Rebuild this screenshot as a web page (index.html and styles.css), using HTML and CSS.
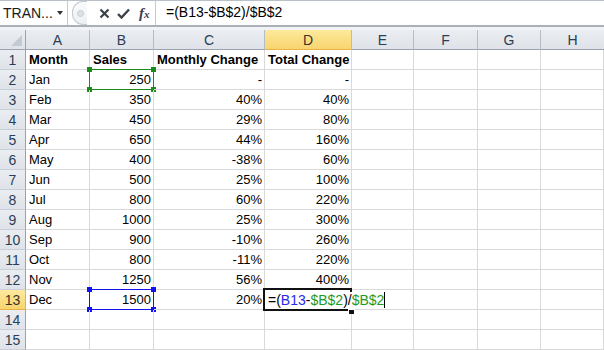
FILE: index.html
```html
<!DOCTYPE html>
<html lang="en">
  <head>
    <meta charset="UTF-8" />
    <title>Total Change</title>
    <link rel="stylesheet" href="styles.css">
  </head>
  <body>
    <!-- formula bar -->
    <div class="toolbar">
      <div class="namebox">
        <span class="name">TRAN...</span>
        <span class="arrow"></span>
      </div>
      <div class="tools">
        <span class="grip"><span class="dot"></span></span>
        <svg class="tool" width="11" height="11" viewBox="0 0 11 11">
          <path d="M1.5 1.5 L9.5 9.5 M9.5 1.5 L1.5 9.5" stroke="#3c4049" stroke-width="2.2" />
        </svg>
        <svg class="tool" width="13" height="11" viewBox="0 0 13 11">
          <path d="M1 6 L4.5 9.5 L12 1.5" stroke="#3c4049" stroke-width="2.4" fill="none" />
        </svg>
        <span class="fx">f<i>x</i></span>
      </div>
      <div class="formula">=(B13-$B$2)/$B$2</div>
    </div>
    <div class="gap"></div>

    <!-- sheet -->
    <div class="sheet">
      <div class="hd corner"><span class="tri"></span></div>
      <div class="hd col">A</div>
      <div class="hd col">B</div>
      <div class="hd col">C</div>
      <div class="hd col on">D</div>
      <div class="hd col">E</div>
      <div class="hd col">F</div>
      <div class="hd col">G</div>
      <div class="hd col last">H</div>

      <div class="hd row">1</div>
      <div class="cell b">Month</div>
      <div class="cell b">Sales</div>
      <div class="cell b">Monthly Change</div>
      <div class="cell b">Total Change</div>
      <div class="cell"></div><div class="cell"></div><div class="cell"></div><div class="cell"></div>

      <div class="hd row">2</div>
      <div class="cell">Jan</div>
      <div class="cell n">250<span class="ref green"><i class="h tl"></i><i class="h tr"></i><i class="h bl"></i><i class="h br"></i></span></div>
      <div class="cell n">-</div>
      <div class="cell n">-</div>
      <div class="cell"></div><div class="cell"></div><div class="cell"></div><div class="cell"></div>

      <div class="hd row">3</div>
      <div class="cell">Feb</div><div class="cell n">350</div><div class="cell n">40%</div><div class="cell n">40%</div>
      <div class="cell"></div><div class="cell"></div><div class="cell"></div><div class="cell"></div>

      <div class="hd row">4</div>
      <div class="cell">Mar</div><div class="cell n">450</div><div class="cell n">29%</div><div class="cell n">80%</div>
      <div class="cell"></div><div class="cell"></div><div class="cell"></div><div class="cell"></div>

      <div class="hd row">5</div>
      <div class="cell">Apr</div><div class="cell n">650</div><div class="cell n">44%</div><div class="cell n">160%</div>
      <div class="cell"></div><div class="cell"></div><div class="cell"></div><div class="cell"></div>

      <div class="hd row">6</div>
      <div class="cell">May</div><div class="cell n">400</div><div class="cell n">-38%</div><div class="cell n">60%</div>
      <div class="cell"></div><div class="cell"></div><div class="cell"></div><div class="cell"></div>

      <div class="hd row">7</div>
      <div class="cell">Jun</div><div class="cell n">500</div><div class="cell n">25%</div><div class="cell n">100%</div>
      <div class="cell"></div><div class="cell"></div><div class="cell"></div><div class="cell"></div>

      <div class="hd row">8</div>
      <div class="cell">Jul</div><div class="cell n">800</div><div class="cell n">60%</div><div class="cell n">220%</div>
      <div class="cell"></div><div class="cell"></div><div class="cell"></div><div class="cell"></div>

      <div class="hd row">9</div>
      <div class="cell">Aug</div><div class="cell n">1000</div><div class="cell n">25%</div><div class="cell n">300%</div>
      <div class="cell"></div><div class="cell"></div><div class="cell"></div><div class="cell"></div>

      <div class="hd row">10</div>
      <div class="cell">Sep</div><div class="cell n">900</div><div class="cell n">-10%</div><div class="cell n">260%</div>
      <div class="cell"></div><div class="cell"></div><div class="cell"></div><div class="cell"></div>

      <div class="hd row">11</div>
      <div class="cell">Oct</div><div class="cell n">800</div><div class="cell n">-11%</div><div class="cell n">220%</div>
      <div class="cell"></div><div class="cell"></div><div class="cell"></div><div class="cell"></div>

      <div class="hd row">12</div>
      <div class="cell">Nov</div><div class="cell n">1250</div><div class="cell n">56%</div><div class="cell n">400%</div>
      <div class="cell"></div><div class="cell"></div><div class="cell"></div><div class="cell"></div>

      <div class="hd row on">13</div>
      <div class="cell">Dec</div>
      <div class="cell n">1500<span class="ref blue"><i class="h tl"></i><i class="h tr"></i><i class="h bl"></i><i class="h br"></i></span></div>
      <div class="cell n">20%</div>
      <div class="cell edit">
        <span class="active"><i class="fill"></i></span>
        <span class="entry"><span class="k">=(</span><span class="c-blue">B13</span><span class="k">-</span><span class="c-green">$B$2</span><span class="k">)/</span><span class="c-green">$B$2</span><span class="caret"></span></span>
      </div>
      <div class="cell"></div><div class="cell"></div><div class="cell"></div><div class="cell"></div>

      <div class="hd row">14</div>
      <div class="cell"></div><div class="cell"></div><div class="cell"></div><div class="cell"></div>
      <div class="cell"></div><div class="cell"></div><div class="cell"></div><div class="cell"></div>

      <div class="hd row">15</div>
      <div class="cell"></div><div class="cell"></div><div class="cell"></div><div class="cell"></div>
      <div class="cell"></div><div class="cell"></div><div class="cell"></div><div class="cell"></div>
    </div>
  </body>
</html>
```

FILE: styles.css
```css
body {
  margin: 0;
  background: white;
  width: 604px;
  height: 350px;
  overflow: hidden;
  font-family: "Liberation Sans", Arial, sans-serif;
  font-size: 13px;
  color: #000;
}

/* formula bar */
.toolbar {
  display: flex;
  height: 24px;
  border-top: 1px solid #b9c0c8;
  border-bottom: 2px solid #a9b0b8;
  background: #fff;
}

.namebox {
  width: 68px;
  display: flex;
  align-items: center;
  justify-content: space-between;
  padding: 0 4px 0 3px;
  box-sizing: border-box;
  border-right: 1px solid #c4cad2;
}

.name {
  font-size: 14px;
  color: #1a1a1a;
}

.arrow {
  width: 0;
  height: 0;
  border-left: 3px solid transparent;
  border-right: 3px solid transparent;
  border-top: 4px solid #333;
}

.tools {
  width: 88px;
  display: flex;
  align-items: center;
  background: #fff;
  border-right: 1px solid #c4cad2;
  box-sizing: border-box;
}

.grip {
  width: 14px;
  height: 22px;
  margin-left: 4px;
  border: 1px solid #c5cbd2;
  border-radius: 11px 0 0 11px;
  border-right: none;
  background: linear-gradient(#fafbfc, #eceff2);
  display: flex;
  align-items: center;
  justify-content: center;
}

.dot {
  width: 5px;
  height: 5px;
  border-radius: 50%;
  background: #dde1e5;
  border: 1px solid #c9ced4;
}

.tool {
  display: block;
  margin-left: 12px;
}

.tool + .tool {
  margin-left: 7px;
}

.fx {
  margin-left: 9px;
  font-family: "Liberation Serif", serif;
  font-style: italic;
  font-weight: bold;
  font-size: 15px;
  color: #3c4049;
}

.fx i {
  font-size: 11px;
}

.formula {
  flex: 1;
  padding-left: 10px;
  line-height: 23px;
  font-size: 14px;
}

.gap {
  height: 3px;
  background: #f1f3f6;
}

/* grid */
.sheet {
  display: grid;
  grid-template-columns: 26px 64px 64px 111px 87px 62px 64px 63px 63px;
  grid-auto-rows: 20px;
}

.hd {
  box-sizing: border-box;
  background: linear-gradient(#eaedf1, #dfe3e9);
  color: #2b3e55;
  font-size: 14px;
  display: flex;
  align-items: center;
  justify-content: center;
}

.col {
  border-right: 1px solid #b5bcc5;
  border-bottom: 1px solid #9aa3ad;
}

.col.last {
  border-right: none;
}

.row {
  border-right: 1px solid #9aa3ad;
  border-bottom: 1px solid #c9cfd6;
}

.hd.on {
  background: linear-gradient(#fde99c, #f8d46e);
  border-bottom-color: #eab04a;
  color: #3a3326;
}

.row.on {
  border-right-color: #eab04a;
}

.corner {
  border-right: 1px solid #9aa3ad;
  border-bottom: 1px solid #9aa3ad;
  position: relative;
}

.tri {
  position: absolute;
  right: 3px;
  bottom: 3px;
  width: 0;
  height: 0;
  border-left: 11px solid transparent;
  border-bottom: 11px solid #c4cad1;
}

.cell {
  box-sizing: border-box;
  border-right: 1px solid #d9d9d9;
  border-bottom: 1px solid #d9d9d9;
  padding: 1px 3px 0 3px;
  line-height: 18px;
  white-space: nowrap;
  position: relative;
}

.cell.b {
  font-weight: bold;
}

.cell.n {
  text-align: right;
  padding-right: 2px;
}

/* reference boxes */
.ref {
  position: absolute;
  left: -1px;
  top: -1px;
  right: -1px;
  bottom: -1px;
  border: 1px solid;
}

.ref.green {
  border-color: #1a8a1a;
}

.ref.blue {
  border-color: #1212f0;
}

.h {
  position: absolute;
  width: 5px;
  height: 5px;
  background: currentColor;
}

.green .h { color: #1a8a1a; }
.blue .h { color: #1212f0; }

.h.tl { left: -3px; top: -3px; }
.h.tr { right: -3px; top: -3px; }
.h.bl { left: -3px; bottom: -3px; }
.h.br { right: -3px; bottom: -3px; }

/* cell being edited */
.edit {
  overflow: visible;
  z-index: 2;
  font-size: 14px;
  padding-left: 1px;
}

.entry {
  position: relative;
  display: inline-block;
  background: #fff;
  padding: 0 1px 0 2px;
  line-height: 17px;
  margin-top: 0;
}

.k { color: #000; }
.c-blue { color: #2828e8; }
.c-green { color: #1f9a1f; }

.caret {
  display: inline-block;
  width: 1px;
  height: 16px;
  background: #000;
  vertical-align: -3px;
}

.active {
  position: absolute;
  left: -2px;
  top: -2px;
  right: -1px;
  bottom: -2px;
  border: 2px solid #111;
}

.fill {
  position: absolute;
  right: -5px;
  bottom: -5px;
  width: 5px;
  height: 4px;
  background: #111;
  border: 1px solid #fff;
  border-bottom: none;
}
```
